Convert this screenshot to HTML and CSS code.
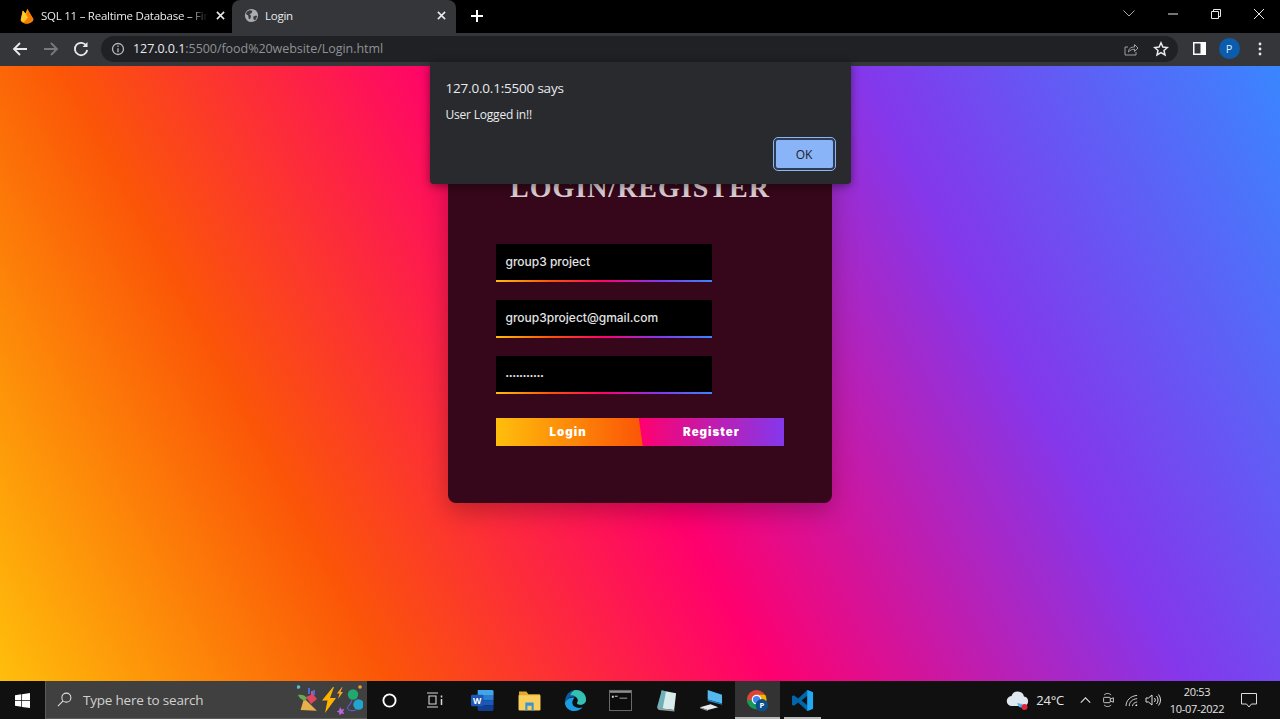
FILE: index.html
```html
<!DOCTYPE html>
<html lang="en">
<head>
<meta charset="utf-8">
<title>Login</title>
<link rel="stylesheet" href="styles.css">
</head>
<body>
<div class="screen">
  <header class="tabstrip">
    <div class="tab tab-inactive">
      <svg class="favicon" viewBox="0 0 14 16"><path fill="#ffa000" d="M.8 11.500 2.800 2.500 5.500 5.500 7.300.8l6 10.200c.5 2-2.500 4.500-6.300 4.500S.5 13.500.8 11.500z"/><path fill="#f57c00" d="M.8 11.500 6 6.500l2.500-3.500 4.800 8c.5 2-2.500 4.500-6.300 4.500S.5 13.500.8 11.500z"/><path fill="#ffca28" d="M.8 11.500 2.800 2.500 5.500 5.500 8 9.500 4 14C2 13.500.6 12.500.8 11.500z"/></svg>
      <span class="tab-title tab-title-fade">SQL 11 – Realtime Database – Fir</span>
      <svg class="tab-close" viewBox="0 0 10 10"><path d="M1 1l8 8M9 1l-8 8"/></svg>
    </div>
    <div class="tab tab-active">
      <svg class="favicon globe" viewBox="0 0 16 16"><circle cx="8" cy="8" r="7" fill="#a9acb0"/><path fill="#3a3b3f" d="M3 4l3-1.500 3 .5-1 2.500-2 1 1.500 2-1 3.500-1.500-.5-.5-3.500-2.500-1.500zM10 9l3-1 1 1-2 4-2-1z"/></svg>
      <span class="tab-title">Login</span>
      <svg class="tab-close" viewBox="0 0 10 10"><path d="M1 1l8 8M9 1l-8 8"/></svg>
    </div>
    <svg class="newtab" viewBox="0 0 12 12"><path d="M6 0v12M0 6h12"/></svg>
    <div class="win-controls">
      <svg class="chev" viewBox="0 0 12 7"><path d="M.5.500 6 6l5.500-5.500"/></svg>
      <svg class="wbtn" viewBox="0 0 10 10"><path d="M0 5h10"/></svg>
      <svg class="wbtn" viewBox="0 0 10 10"><path d="M.5 2.500h7v7h-7zM2.500 2.500v-2h7v7h-2"/></svg>
      <svg class="wbtn" viewBox="0 0 10 10"><path d="M0 0l10 10M10 0 0 10"/></svg>
    </div>
  </header>
  <nav class="toolbar">
    <svg class="nav-icon" viewBox="0 0 16 16"><path d="M15 8H2M8 2 2 8l6 6"/></svg>
    <svg class="nav-icon nav-dim" viewBox="0 0 16 16"><path d="M1 8h13M8 2l6 6-6 6"/></svg>
    <svg class="nav-icon" viewBox="0 0 16 16"><path d="M13.500 5A6.200 6.200 0 1 0 14.200 9"/><path class="solid" d="M14.500 1v5h-5z"/></svg>
    <div class="omnibox">
      <svg class="info" viewBox="0 0 14 14"><circle cx="7" cy="7" r="5.500"/><path d="M7 6.300v4M7 3.500v1.500"/></svg>
      <span class="url"><b>127.0.0.1</b>:5500/food%20website/Login.html</span>
      <svg class="share" viewBox="0 0 16 16"><path d="M2 6v8h11v-3M2 6h3M5.500 11c0-3.500 2.500-5 6-5V3.500L15 7l-3.500 3.500V8.200c-2.500 0-4.500 1-6 2.800z"/></svg>
      <svg class="star" viewBox="0 0 16 16"><path d="M8 1.800 9.900 6l4.500.5-3.400 3 1 4.500L8 11.700 4 14l1-4.500-3.400-3L6.100 6z"/></svg>
    </div>
    <svg class="sidepanel" viewBox="0 0 13 13"><path fill="#fff" d="M0 0h13v13H0z"/><path fill="#35363a" d="M1.500 1.500h6v10h-6z"/></svg>
    <span class="avatar">P</span>
    <svg class="kebab" viewBox="0 0 4 14"><circle cx="2" cy="2" r="1.400"/><circle cx="2" cy="7" r="1.400"/><circle cx="2" cy="12" r="1.400"/></svg>
  </nav>
  <main class="page">
    <section class="card">
      <h1 class="card-title">LOGIN/REGISTER</h1>
      <div class="field"><span class="field-text">group3 project</span></div>
      <div class="field"><span class="field-text">group3project@gmail.com</span></div>
      <div class="field"><span class="field-text field-dots">•••••••••••</span></div>
      <div class="actions">
        <span class="act act-login">Login</span>
        <span class="act act-register">Register</span>
      </div>
    </section>
    <div class="dialog">
      <p class="dialog-origin">127.0.0.1:5500 says</p>
      <p class="dialog-msg">User Logged in!!</p>
      <div class="dialog-actions"><span class="ok">OK</span></div>
    </div>
  </main>
  <footer class="taskbar">
    <div class="start"><svg viewBox="0 0 16 16"><path fill="#fff" d="M0 2.300 6.700 1.400v6.200H0zM7.500 1.300 16 0v7.600H7.500zM0 8.400h6.700v6.200L0 13.700zM7.500 8.400H16V16l-8.500-1.200z"/></svg></div>
    <div class="search">
      <svg class="mag" viewBox="0 0 16 16"><circle cx="10" cy="6" r="4.800"/><path d="M6.500 9.500 1 15"/></svg>
      <span class="search-text">Type here to search</span>
      <svg class="search-art" viewBox="0 0 66 30">
        <circle cx="1.500" cy="2" r="1.800" fill="#4fc3c7"/>
        <path fill="#e8b04c" d="M8 13l11 14-16-3z" transform="rotate(-8 10 20)"/>
        <path fill="#6aa84f" d="M1 10c3-1 7 0 9 3l-2 3c-3-1-6-3-7-6z"/>
        <path fill="#e0475f" d="M9 12l7-3 4 5-6 5z"/>
        <path fill="#3f6fd8" d="M11 3h2v6h-2zM16 5h2v5h-2z"/>
        <path fill="#d94d7a" d="M14 6h2v4h-2z"/>
        <path fill="#ffb300" d="M36 2 25 15.500h5.500L28 28l11-15h-6l4-11z"/>
        <path fill="#f5a623" d="M45 2l-5 6.500h2.500L41 14l5-7h-2.500l2-5z"/>
        <circle cx="63" cy="2" r="1.800" fill="#f0a030"/>
        <path fill="#b565e0" d="M43 22l1.500 2.500 2.800-.4-1.300 2.500 1.300 2.400-2.800-.4L42.500 30.500l-.3-2.800-2.500-1.300 2.500-1.200z"/>
        <path fill="none" stroke="#5c5bd0" stroke-width="1.100" d="M55 15c-1 3-2 5-4 6M59 25c-3 1-7 1-8-1-1-1 0-3 1-3"/>
        <circle cx="56" cy="9.500" r="5.200" fill="#22a86e"/>
        <circle cx="61.500" cy="19.500" r="5.200" fill="#23a3cf"/>
      </svg>
    </div>
    <div class="task-icon"><svg class="cortana" viewBox="0 0 16 16"><circle cx="8" cy="8" r="6.500"/></svg></div>
    <div class="task-icon"><svg class="taskview" viewBox="0 0 18 16"><path d="M1 1h11M1 15h11M3 4h7v8H3z"/><path d="M15.500 3.500v2M15.500 7v6" stroke-width="1.500"/></svg></div>
    <div class="task-icon task-first"><svg class="app" viewBox="0 0 24 22"><path fill="#41a5ee" d="M7 0h15a1.500 1.500 0 0 1 1.500 1.500V6H7z"/><path fill="#2b7cd3" d="M7 6h16.500v5H7z"/><path fill="#185abd" d="M7 11h16.500v5H7z"/><path fill="#103f91" d="M7 16h16.500v4.500A1.500 1.500 0 0 1 22 22H8.500A1.500 1.500 0 0 1 7 20.500z"/><rect x="0" y="5" width="13" height="12" rx="1.200" fill="#1d58b4"/><text class="word-w" x="6.500" y="14.500">W</text></svg></div>
    <div class="task-icon"><svg class="app" viewBox="0 0 22 20"><path fill="#e2a92f" d="M1 1.500h7l2 2.500h11v2H1z"/><path fill="#f8cf5d" d="M0.500 5h21v13.500a1 1 0 0 1-1 1h-19a1 1 0 0 1-1-1z"/><path fill="#3c93d4" d="M7 12h8v7.500h-2V15H9v4.500H7z"/></svg></div>
    <div class="task-icon"><svg class="app" viewBox="0 0 24 24"><path fill="#0c59a4" d="M1 14C1 6 6 1 12.500 1c6.500 0 10.500 4.700 10.500 10 0 3.500-3 5.500-6 5.500-2.200 0-3.500-1-3.500-1.800 0-.7 1-1 1-2.700 0-2.200-2-4-4.500-4C6 8 3.500 10 1 14z"/><path fill="#35c1b0" d="M23 11c0 3.500-3 5.500-6 5.500-2.200 0-3.500-1-3.500-1.800 0-.7 1-1 1-2.700 0-3-3-6-8-5.500C8 3 10 1 12.500 1 18.500 1 23 5.700 23 11z"/><path fill="#1b9de2" d="M1 14c0 5.500 4.500 9 10 9 3.500 0 6.500-1.500 8.500-4-5 2-9.500 0-10.500-3-.8-2.500 0-5 2-7-5-1-8 1.500-10 5z"/></svg></div>
    <div class="task-icon"><svg class="app" viewBox="0 0 24 22"><rect x=".5" y=".5" width="23" height="21" fill="#0c0c0c" stroke="#6e6e6e"/><path fill="#8e8e8e" d="M1 1h22v2H1z"/><path fill="#cfcfcf" d="M3 6h2v2H3zM6 6h3v1H6zM11 8h8v1h-8z"/></svg></div>
    <div class="task-icon"><svg class="app" viewBox="0 0 22 24"><path fill="#d8ecec" d="M6 1.500l15 3L19 22 3 20z"/><path fill="#6fb0b8" d="M6 1.500 10.500 2.400 7 20.500 1 19.500z"/><path fill="#939ea0" d="M1 19.500l18 2.500.5 1.500L3 22z"/></svg></div>
    <div class="task-icon"><svg class="app" viewBox="0 0 24 22"><path fill="#54b8ec" d="M8 0l15 5v9L8 10z"/><path fill="#2a7fbf" d="M8 10l15 4v1.500L8 11.500z"/><path fill="#e6e9eb" d="M0 18l11-3 8 3-11 3z"/><path fill="#9da3a8" d="M0 18l8 3v1l-8-3z"/></svg></div>
    <div class="task-icon task-open task-current"><svg class="app" viewBox="0 0 24 24"><circle cx="11" cy="11" r="10" fill="#db4437"/><path fill="#0f9d58" d="M1 11a10 10 0 0 0 9 10l5-8.500H7z"/><path fill="#f4b400" d="M11 6h9a10 10 0 0 1-9 15l4.500-7.500z"/><circle cx="11" cy="11" r="5" fill="#fff"/><circle cx="11" cy="11" r="3.800" fill="#4285f4"/><circle cx="16.500" cy="17" r="6.500" fill="#0b4f8a"/><text class="chrome-p" x="16.500" y="20">P</text></svg></div>
    <div class="task-icon task-open"><svg class="app" viewBox="0 0 24 24"><path fill="#0065a9" d="M17 1 7.500 10 3 6.500 1 7.500v9l2 1L7.500 14 17 23l6-2.500v-17zM17 7v10l-6-5z"/><path fill="#23a9f2" d="M17 1l6 2.500v17L17 23z"/></svg></div>
    <div class="tray">
      <svg class="weather" viewBox="0 0 24 22"><path fill="#dfe7f0" d="M6 17a5 5 0 0 1-.5-10A6.500 6.500 0 0 1 18 7.500 4.800 4.800 0 0 1 18 17z"/><path fill="#4fb3e8" d="M11 14l5 1 1 4-4-1z"/><circle cx="18.500" cy="18" r="3" fill="#e0263c"/></svg>
      <span class="temp">24°C</span>
      <svg class="tray-icon caret" viewBox="0 0 12 7"><path d="M.5 6.500 6 1l5.500 5.500"/></svg>
      <svg class="tray-icon meet" viewBox="0 0 14 18"><path d="M2 3.500C4 1 8 1 10 3.500M2 14.500c2 2.500 6 2.500 8 0"/><rect x="1.500" y="6" width="7.500" height="6" rx="1"/><path d="M9 8l3.500-1.500v5L9 10"/></svg>
      <svg class="tray-icon wifi" viewBox="0 0 16 14"><path d="M1 13C1 7 6 2 13 1.500M4.500 13c0-4 3-7.500 8.500-8M8 13c0-2 2-4 5-4.500"/><path class="solid" d="M11 13a2 2 0 0 1 2-2v2z"/></svg>
      <svg class="tray-icon speaker" viewBox="0 0 16 14"><path d="M1 5v4h2.500L7 12V2L3.500 5zM9.500 5a3 3 0 0 1 0 4M11.500 3a6 6 0 0 1 0 8M13.500 1.500a8.500 8.500 0 0 1 0 11"/></svg>
      <div class="clock"><span>20:53</span><span>10-07-2022</span></div>
      <svg class="tray-icon notify" viewBox="0 0 16 15"><path d="M.5.500h15v10.500h-5L8 14l-2.500-3H.5z"/></svg>
    </div>
  </footer>
</div>
</body>
</html>
```
FILE: styles.css
```css
* { box-sizing: border-box; }
html, body { margin: 0; padding: 0; height: 100%; overflow: hidden; }
body { font-family: "Open Sans", "Noto Sans", sans-serif; background: #000; }
.screen { width: 1280px; height: 719px; display: flex; flex-direction: column; }

/* browser chrome */
.tabstrip { height: 33px; background: #000; display: flex; align-items: flex-end; padding-left: 8px; color: #fff; flex: none; }
.tab { height: 33px; display: flex; align-items: center; font-size: 11.500px; letter-spacing: -.25px; }
.tab-inactive { width: 224px; padding: 0 10px 2px 12px; color: #e8eaed; }
.tab-active { width: 224px; padding: 0 10px 2px 12px; background: #35363a; border-radius: 8px 8px 0 0; color: #e8eaed; }
.favicon { width: 14px; height: 16px; flex: none; margin-right: 7px; }
.globe { width: 15px; height: 15px; margin-right: 6px; }
.tab-title { flex: 1; white-space: nowrap; }
.tab-title-fade { -webkit-mask-image: linear-gradient(90deg, #000 88%, transparent 100%); mask-image: linear-gradient(90deg, #000 88%, transparent 100%); margin-right: 8px; }
.tab-close { width: 9px; height: 9px; flex: none; fill: none; stroke: #e8eaed; stroke-width: 1.700; }
.newtab { width: 12px; height: 12px; margin: 0 0 11px 15px; fill: none; stroke: #fff; stroke-width: 2; flex: none; }
.win-controls { margin-left: auto; height: 33px; display: flex; align-items: center; padding: 0 16px 6px 0; gap: 33px; }
.chev { width: 12px; height: 7px; fill: none; stroke: #a8a8a8; }
.wbtn { width: 10px; height: 10px; fill: none; stroke: #e8e8e8; stroke-width: 1; }
.toolbar { height: 33px; background: #35363a; display: flex; align-items: center; padding: 0 0 2px 12px; flex: none; }
.nav-icon { width: 16px; height: 16px; fill: none; stroke: #e8eaed; stroke-width: 1.800; margin-right: 14.500px; flex: none; }
.nav-dim { stroke: #77797d; }
.solid { fill: #e8eaed; stroke: none; }
.omnibox { width: 1076.500px; height: 26px; margin-left: -2.500px; border-radius: 13px; background: #202124; display: flex; align-items: center; padding: 0 9px 0 10px; }
.info { width: 14px; height: 14px; fill: none; stroke: #b5b7ba; stroke-width: 1.300; margin-right: 8px; flex: none; }
.url { font-size: 12.500px; letter-spacing: -.05px; color: #8f9296; flex: 1; white-space: nowrap; }
.url b { font-weight: 400; color: #e8eaed; }
.share { width: 16px; height: 16px; fill: none; stroke: #9a9da1; margin-right: 14px; flex: none; }
.star { width: 16px; height: 16px; fill: none; stroke: #e8eaed; stroke-width: 1.500; flex: none; }
.sidepanel { width: 13px; height: 13px; margin: 0 0 0 15px; flex: none; }
.avatar { width: 21px; height: 21px; margin-left: 13px; border-radius: 50%; background: #0b5cad; color: #dfe9f5; font-size: 11px; display: flex; align-items: center; justify-content: center; flex: none; }
.kebab { width: 4px; height: 14px; margin-left: 18px; fill: #e8eaed; flex: none; }

/* page */
.page { position: relative; flex: 1; min-height: 0; display: flex; justify-content: center; align-items: flex-start; background: linear-gradient(62deg, #ffbe0b 0%, #fb5607 24%, #ff006e 48%, #8338ec 74%, #3a86ff 100%); }
.card { width: 384px; height: 385px; margin-top: 52px; padding: 52px 0 0 47.500px; border-radius: 8px; background: #36071a; box-shadow: 0 8px 24px rgba(0,0,0,.25); display: flex; flex-direction: column; align-items: flex-start; }
.card-title { margin: 0 0 38px 14.500px; font: 700 28px/36px "Liberation Serif", serif; letter-spacing: 1px; color: #d9ccd0; white-space: nowrap; }
.field { width: 216.500px; height: 38px; margin-bottom: 18px; padding: 0 10px 2px; background: #000; display: flex; align-items: center; border-bottom: 2px solid; border-image: linear-gradient(90deg, #ffbe0b, #fb5607, #ff006e, #8338ec, #3a86ff) 1; }
.field-text { font: 500 12px "Inter", "Open Sans", sans-serif; color: #e4e4e4; }
.field-dots { font-size: 6.500px; letter-spacing: 0; padding-top: 5px; }
.actions { display: flex; width: 288.500px; height: 28px; margin-top: 6px; background: linear-gradient(90deg, #fb5607 60%, #8338ec 60%); }
.act { flex: 1; display: flex; align-items: center; justify-content: center; color: #fff; font: 900 11.500px "Inter", sans-serif; letter-spacing: 1px; }
.act-login { background: linear-gradient(90deg, #ffbe0b, #fb5607); }
.act-register { background: linear-gradient(90deg, #ff006e, #8338ec); clip-path: polygon(0 0, 100% 0, 100% 100%, 4px 100%); margin-left: -2px; }

/* dialog */
.dialog { position: absolute; left: 430px; top: -4px; width: 420.500px; height: 122px; padding: 16px 15.500px 0; background: #292a2d; border-radius: 0 0 4px 4px; box-shadow: 0 2px 10px rgba(0,0,0,.45); color: #e8eaed; }
.dialog-origin { margin: 0 0 8px; font-size: 13.500px; line-height: 20px; letter-spacing: -.2px; }
.dialog-msg { margin: 0; font-size: 12px; line-height: 18px; letter-spacing: -.2px; }
.dialog-actions { position: absolute; right: 16px; bottom: 14px; }
.ok { width: 61px; height: 32px; display: flex; align-items: center; justify-content: center; background: #8ab4f8; border: 2px solid #2d3b55; outline: 1.500px solid #8ab4f8; border-radius: 4px; font-size: 12px; color: #202124; }

/* taskbar */
.taskbar { height: 38px; background: #101010; display: flex; align-items: stretch; flex: none; }
.start { width: 45px; display: flex; align-items: center; justify-content: center; }
.start svg { width: 15px; height: 15px; margin-top: 1px; }
.search { width: 322px; background: #404040; border-bottom: 1px solid #5a5a5a; border-left: 1px solid #5a5a5a; display: flex; align-items: center; padding-left: 11px; }
.mag { width: 15px; height: 15px; fill: none; stroke: #e0e0e0; stroke-width: 1.100; flex: none; }
.search-text { margin-left: 11px; font-size: 13.500px; letter-spacing: -.2px; color: #d0d0d0; white-space: nowrap; }
.search-art { width: 66px; height: 30px; margin-left: auto; margin-right: 4px; flex: none; }
.task-icon { width: 45.500px; display: flex; align-items: center; justify-content: center; flex: none; }
.task-first { margin-left: 3.500px; }
.task-first .app { margin-right: 4px; }
.task-open { background: linear-gradient(#b8b8b8, #b8b8b8) center bottom / 37px 2px no-repeat; }
.task-current { background: linear-gradient(#b8b8b8, #b8b8b8) center bottom / 100% 2px no-repeat, #333; }
.app { width: 23px; height: 23px; }
.cortana { width: 15px; height: 15px; fill: none; stroke: #fff; stroke-width: 2; }
.taskview { width: 18px; height: 16px; fill: none; stroke: #d8d8d8; stroke-width: 1.100; }
.word-w { font: 700 9px "Open Sans", sans-serif; fill: #fff; text-anchor: middle; }
.chrome-p { font: 700 8px "Open Sans", sans-serif; fill: #fff; text-anchor: middle; }
.tray { margin-left: auto; display: flex; align-items: center; color: #e4e4e4; padding-right: 23px; }
.weather { width: 24px; height: 22px; flex: none; }
.temp { margin-left: 6px; font-size: 13px; letter-spacing: -.2px; }
.tray-icon { fill: none; stroke: #dcdcdc; flex: none; }
.caret { width: 11px; height: 6px; margin-left: 16px; stroke-width: 1.300; }
.meet { width: 13px; height: 16px; margin-left: 11px; }
.wifi { width: 15px; height: 13px; margin-left: 10px; }
.speaker { width: 16px; height: 14px; margin-left: 5px; }
.clock { width: 60px; margin-left: 6px; display: flex; flex-direction: column; align-items: center; font-size: 11px; line-height: 17px; letter-spacing: -.3px; }
.notify { width: 16px; height: 15px; margin-left: 14px; }
```
